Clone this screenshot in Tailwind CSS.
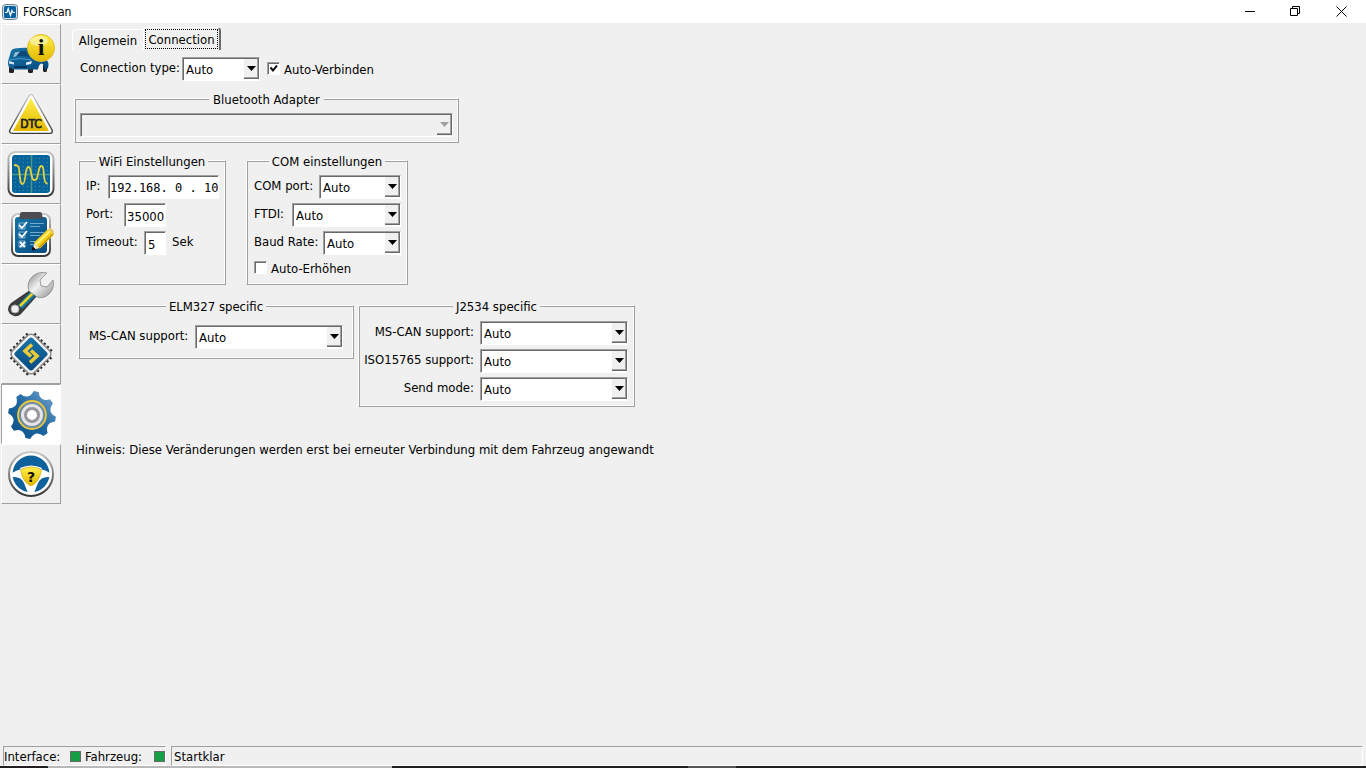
<!DOCTYPE html>
<html lang="de">
<head>
  <meta charset="UTF-8" />
  <meta name="viewport" content="width=device-width, initial-scale=1.0" />
  <title>FORScan</title>
  <script src="https://cdn.jsdelivr.net/npm/@tailwindcss/browser@4"></script>
</head>
<body class="flex h-screen flex-col overflow-hidden bg-[#f0f0f0] font-['DejaVu_Sans_Condensed','DejaVu_Sans',sans-serif] text-[13px] leading-4 text-black">
  <!-- Shared gradients -->
  <svg class="absolute size-0" aria-hidden="true">
    <defs>
      <linearGradient id="blue" x1="0" y1="0" x2="1" y2="1"><stop offset="0" stop-color="#1674a8" /><stop offset="1" stop-color="#084a80" /></linearGradient>
      <linearGradient id="yellow" x1="0" y1="0" x2="0" y2="1"><stop offset="0" stop-color="#fff04a" /><stop offset="1" stop-color="#e3b800" /></linearGradient>
      <linearGradient id="steel" x1="0" y1="0" x2="0" y2="1"><stop offset="0" stop-color="#c8c8c8" /><stop offset="1" stop-color="#383838" /></linearGradient>
      <linearGradient id="chrome" x1="0" y1="0" x2="1" y2="1"><stop offset="0" stop-color="#858585" /><stop offset=".45" stop-color="#f2f2f2" /><stop offset="1" stop-color="#8c8c8c" /></linearGradient>
      <linearGradient id="gear" x1="0" y1="1" x2="1" y2="0"><stop offset="0" stop-color="#084c86" /><stop offset=".5" stop-color="#2067a0" /><stop offset="1" stop-color="#78a9d2" /></linearGradient>
    </defs>
  </svg>

  <!-- Title bar -->
  <header class="flex h-[23px] shrink-0 items-center bg-white pr-0.5 pl-[2px]">
    <svg class="mr-[5px] size-4" viewBox="0 0 16 16" aria-hidden="true">
      <rect x=".5" y=".5" width="15" height="15" rx="3" fill="#d5e2eb" stroke="#6b8494" />
      <rect x="2" y="2" width="12" height="12" rx="1.5" fill="#07619c" />
      <path d="M3 8.500h2l1.200-4 2.300 7 1.500-5 1 2h2" fill="none" stroke="#fff" stroke-width="1.200" />
    </svg>
    <h1 class="flex-1 text-[12px]">FORScan</h1>
    <button class="flex h-5 w-[46px] items-center justify-center" aria-label="Minimieren">
      <svg class="size-[11px]" viewBox="0 0 11 11"><path d="M0 5.500h10" stroke="#000" /></svg>
    </button>
    <button class="flex h-5 w-[45px] items-center justify-center" aria-label="Wiederherstellen">
      <svg class="size-[11px]" viewBox="0 0 11 11"><path d="M.5 2.500h7v7h-7zM2.500 2.500v-2h7v7h-2" fill="none" stroke="#000" /></svg>
    </button>
    <button class="flex h-5 w-[46px] items-center justify-center" aria-label="Schließen">
      <svg class="size-[11px]" viewBox="0 0 11 11"><path d="M.5.5l10 10M10.500.5l-10 10" stroke="#000" /></svg>
    </button>
  </header>

  <div class="flex min-h-0 flex-1">
    <!-- Sidebar -->
    <nav class="ml-px w-[60px] shrink-0 pt-px" aria-label="Module">
      <button class="block size-[60px] border border-t-white border-r-[#a0a0a0] border-b-[#a0a0a0] border-l-white" aria-label="Fahrzeug">
        <svg class="size-[58px]" viewBox="2 1 58 58">
          <rect x="9" y="41" width="5" height="8" rx="1.500" fill="#222" /><rect x="28" y="42" width="5" height="7" rx="1.500" fill="#222" /><rect x="43" y="40" width="4" height="8" rx="1.500" fill="#222" />
          <path d="M9 34l2-7q1-2.500 4-2.500 10-1.500 19 0l9 9 4 3q1.500 1 1.500 4l-.5 4-3 1q-1-6-3.500-6T38 45.500H14l-5-2q-2-5 0-9.500z" fill="url(#blue)" />
          <path d="M12.500 33l2.500-6h11q2 3 3 6-9-2-16.500 0z" fill="#0b4a78" />
          <path d="M13 33l2-5 5-.5-4 5z" fill="#8fbcd6" />
          <path d="M28 27h5l6 6-8 .5z" fill="#8fbcd6" />
          <path d="M9 36q11-3 22 0" stroke="#4c97c4" fill="none" />
          <path d="M9 37l5 1.500v2L9 39.500z" fill="#dbe8ef" /><path d="M32 37l-6 1.500v2.500l5-1z" fill="#e1edf3" />
          <path d="M14 42h13v2H14z" fill="#04355e" />
          <circle cx="41" cy="24" r="13.500" fill="url(#yellow)" stroke="#e2bd1c" />
          <ellipse cx="39" cy="17" rx="9" ry="5" fill="#fff" opacity=".45" />
          <text x="41" y="31" text-anchor="middle" font-family="Liberation Serif, serif" font-weight="700" font-size="24" fill="#111">i</text>
        </svg>
      </button>
      <button class="block size-[60px] border border-t-white border-r-[#a0a0a0] border-b-[#a0a0a0] border-l-white" aria-label="DTC">
        <svg class="size-[58px]" viewBox="2 1 58 58">
          <path d="M31 13L12 47h38z" fill="#fff" stroke="url(#steel)" stroke-width="6" stroke-linejoin="round" />
          <path d="M31 13L12 47h38z" fill="url(#yellow)" stroke="#fff" stroke-width="3.500" stroke-linejoin="round" />
          <path d="M31 14L13 47h36z" fill="url(#yellow)" />
          <text x="31" y="44" text-anchor="middle" font-family="DejaVu Sans Condensed, sans-serif" font-size="12" stroke="#222" stroke-width=".7" fill="#222">DTC</text>
        </svg>
      </button>
      <button class="block size-[60px] border border-t-white border-r-[#a0a0a0] border-b-[#a0a0a0] border-l-white" aria-label="Oszilloskop">
        <svg class="size-[58px]" viewBox="2 1 58 58">
          <rect x="8.500" y="8" width="45" height="44" rx="7" fill="#fff" stroke="url(#steel)" stroke-width="2" />
          <rect x="12" y="11" width="38" height="38" rx="3" fill="#07649b" />
          <path d="M15 14.500h33M15 18.500h33M15 22.500h33M15 26.500h33M15 34.500h33M15 38.500h33M15 42.500h33M15 46.500h33" stroke="#3c8fae" stroke-dasharray="1 3" />
          <path d="M12 30.500h38M31.500 11v38" stroke="#4d9686" stroke-width="1.500" />
          <path d="M14 21c5 0 5 2 5.500 8s1 11 3 11 2.500-4 3-9 1-8 3-8 2 4 3 8 1 5 3.500 5 2-2 3-6 1-8 3.500-8 2 6 2.500 10 .500 7 3.500 8" fill="none" stroke="#e5d13b" stroke-width="1.800" />
        </svg>
      </button>
      <button class="block size-[60px] border border-t-white border-r-[#a0a0a0] border-b-[#a0a0a0] border-l-white" aria-label="Tests">
        <svg class="size-[58px]" viewBox="2 1 58 58">
          <rect x="12" y="10" width="38" height="42" rx="6" fill="#fff" stroke="url(#steel)" stroke-width="2" />
          <rect x="15" y="13" width="32" height="36" rx="3" fill="url(#blue)" />
          <path d="M20 10q0-2 2-2h18q2 0 2 2l1 5H19z" fill="#4b4d50" />
          <path d="M19 19h6v6h-6zM19 28h6v6h-6zM19 37h6v6h-6z" fill="none" stroke="#7fb0cd" />
          <path d="M19 21l3 3 5-6M19 30l3 3 5-6M20 38l5 5M25 38l-5 5" fill="none" stroke="#fff" stroke-width="1.800" />
          <path d="M30 19.500h14M30 22.500h10M30 28.500h14M30 31.500h10M30 37.500h8M30 40.500h5" stroke="#6fa9cb" />
          <path d="M32 46l3-8 5 6z" fill="#ece2c0" />
          <path d="M32 46l1-3 2.500 2.500z" fill="#111" stroke="#111" />
          <path d="M34 38.500L48 25l6 5.500L40 44.500z" fill="#f5cf16" />
          <path d="M36 40.500L50 27" stroke="#ffef7e" stroke-width="2" /><path d="M39 43.500L53 30" stroke="#c79800" stroke-width="1.500" />
          <path d="M48 25l2-1q4 1 4 5v1.500z" fill="#edc968" />
        </svg>
      </button>
      <button class="block size-[60px] border border-t-white border-r-[#a0a0a0] border-b-[#a0a0a0] border-l-white" aria-label="Service">
        <svg class="size-[58px]" viewBox="2 1 58 58">
          <path d="M30 26l7 6-16 18q-3 3-7 2-6-2-6-7 0-3 3-6z" fill="#3b3d3f" />
          <path d="M30 28l5 4-13 13-4-4z" fill="#1277a9" />
          <path d="M33 29L20 42" stroke="#f1d51c" stroke-width="2.500" />
          <circle cx="15" cy="45" r="4" fill="#f0f0f0" stroke="#aaa" stroke-width="1" />
          <path d="M29 27q-3-9 4-15 6-5 14-3l-7 7 1 6 6 1 6-7q2 8-4 14-5 5-12 3z" fill="url(#chrome)" stroke="#888" stroke-width=".8" />
        </svg>
      </button>
      <button class="block size-[60px] border border-t-white border-r-[#a0a0a0] border-b-[#a0a0a0] border-l-white" aria-label="Module programmieren">
        <svg class="size-[58px]" viewBox="2 1 58 58">
          <g transform="rotate(45 31 30)">
            <path d="M20 12v36M24.500 12v36M29 12v36M33.500 12v36M38 12v36M42.500 12v36M13 19h36M13 23.500h36M13 28h36M13 32.500h36M13 37h36M13 41.500h36" stroke="#2b2b2b" stroke-width="2.200" />
            <rect x="15.500" y="14.500" width="31" height="31" rx="5" fill="#f4f4f4" stroke="#8a8a8a" stroke-width="1.500" />
            <rect x="18.500" y="17.500" width="25" height="25" rx="3" fill="url(#blue)" />
          </g>
          <path d="M32 20.500L25 27l6 5.500M31 26.500l6 5.500-7 6.500" fill="none" stroke="#edcb36" stroke-width="3.600" />
        </svg>
      </button>
      <button class="block size-[60px] border border-t-[#a0a0a0] border-r-white border-b-white border-l-[#a0a0a0] bg-white" aria-label="Einstellungen" aria-pressed="true">
        <svg class="size-[58px]" viewBox="2 1 58 58">
          <path d="M33.700 7.100L38.600 7.900Q40.100 18.300 50.100 15.300L53 19.400Q46.600 27.800 55.900 32.700L55.100 37.600Q44.700 39.100 47.700 49.100L43.600 52Q35.200 45.600 30.300 54.900L25.400 54.100Q23.900 43.700 13.900 46.700L11 42.600Q17.400 34.200 8.100 29.300L8.900 24.400Q19.300 22.900 16.300 12.900L20.400 10Q28.800 16.400 33.700 7.100z" fill="url(#gear)" />
          <circle cx="32" cy="31" r="14" fill="#6d8ba2" stroke="#e8c83c" stroke-width="1.800" />
          <circle cx="32" cy="31" r="9" fill="#fff" stroke="#e5e5e8" stroke-width="4" />
          <circle cx="32" cy="31" r="6.500" fill="#fff" stroke="#97979b" stroke-width="3" />
        </svg>
      </button>
      <button class="block size-[60px] border border-t-white border-r-[#a0a0a0] border-b-[#a0a0a0] border-l-white" aria-label="Hilfe">
        <svg class="size-[58px]" viewBox="2 1 58 58">
          <circle cx="31" cy="30" r="22" fill="#fff" stroke="url(#steel)" stroke-width="2" />
          <circle cx="31" cy="30" r="18.500" fill="#0e619b" />
          <path d="M12 29q8-5 19-5t19 5v4q-9-1-12 6l-4 10h-6l-4-10q-3-7-12-6z" fill="#fff" />
          <path d="M20 24q11-5 22 0l-2 3H22z" fill="#fff" />
          <path d="M22 25q9-4 18 0 2 1 1 3-2 9-8 13-2 1-4 0-6-4-8-13-1-2 1-3z" fill="url(#yellow)" stroke="#d1ac1d" stroke-width=".8" />
          <text x="31" y="38" text-anchor="middle" font-family="DejaVu Sans, sans-serif" font-weight="700" font-size="14" fill="#111">?</text>
        </svg>
      </button>
    </nav>

    <main class="min-w-0 flex-1 overflow-hidden pt-1 pl-[11px]">
      <!-- Tabs -->
      <div class="flex items-end" role="tablist">
        <button role="tab" aria-selected="false" class="h-[21px] w-[71px] rounded-tl-sm border-t border-l border-white pt-0.5">Allgemein</button>
        <button role="tab" aria-selected="true" class="h-[23px] w-[78px] rounded-t-sm border-t border-r-2 border-l border-t-white border-r-[#696969] border-l-white p-px">
          <span class="block h-5 border border-dotted border-black leading-5">Connection</span>
        </button>
      </div>

      <div class="mt-[7px] ml-2 flex h-6 items-center">
        <label for="connType" class="w-[102px] pb-0.5">Connection type:</label>
        <span class="relative w-[78px]">
          <select id="connType" class="block h-6 w-full appearance-none border border-t-[#a0a0a0] border-r-white border-b-white border-l-[#a0a0a0] bg-white pt-0.5 pl-[3px] shadow-[inset_1px_1px_0_#696969]"><option>Auto</option></select>
          <span class="pointer-events-none absolute inset-y-[2px] right-px flex w-[15px] items-center justify-center border-r border-b border-[#696969] bg-[#f0f0f0] shadow-[inset_-1px_-1px_0_#a0a0a0]"><svg class="h-[5px] w-[9px]" viewBox="0 0 9 5"><path d="M0 0h9L4.500 5z" /></svg></span>
        </span>
        <label class="ml-[7px] flex items-center gap-1">
          <input type="checkbox" checked class="peer sr-only" />
          <span class="mb-0.5 flex size-[13px] items-center justify-center border border-t-[#a0a0a0] border-r-white border-b-white border-l-[#a0a0a0] bg-white shadow-[inset_1px_1px_0_#696969] *:hidden peer-checked:*:block"><svg class="size-[9px]" viewBox="0 0 9 9"><path d="M1.500 3.500L4 6.500l4-5" fill="none" stroke="#000" stroke-width="2" /></svg></span>
          <span class="pt-px">Auto-Verbinden</span>
        </label>
      </div>

      <fieldset class="mt-[7px] ml-0.5 w-[385px] border border-t-white border-r-[#a0a0a0] border-b-[#a0a0a0] border-l-white px-[5px] pt-[5px] pb-[5px] shadow-[inset_1px_1px_0_#a0a0a0,inset_-1px_-1px_0_#fff]">
        <legend class="mx-auto bg-[#f0f0f0] px-1 pt-1">Bluetooth Adapter</legend>
        <span class="relative block">
          <select disabled aria-label="Bluetooth Adapter" class="block h-6 w-full appearance-none border border-t-[#a0a0a0] border-r-white border-b-white border-l-[#a0a0a0] bg-[#f0f0f0] shadow-[inset_1px_1px_0_#696969]"><option></option></select>
          <span class="pointer-events-none absolute inset-y-[2px] right-px flex w-[15px] items-center justify-center border-r border-b border-[#696969] bg-[#f0f0f0] shadow-[inset_-1px_-1px_0_#a0a0a0]"><svg class="h-[5px] w-[9px]" viewBox="0 0 9 5"><path d="M0 0h9L4.500 5z" fill="#a0a0a0" /></svg></span>
        </span>
      </fieldset>

      <div class="mt-[7px] ml-1.5 flex gap-5">
        <fieldset class="w-[148px] border border-t-white border-r-[#a0a0a0] border-b-[#a0a0a0] border-l-white shadow-[inset_1px_1px_0_#a0a0a0,inset_-1px_-1px_0_#fff]">
          <legend class="mx-auto bg-[#f0f0f0] px-[3px] pt-1">WiFi Einstellungen</legend>
          <div class="flex flex-col gap-1 pt-[5px] pl-[7px]">
            <div class="flex items-center">
              <label for="ip" class="w-[22px] pb-0.5">IP:</label>
              <input id="ip" type="text" value="192.168. 0 . 10" class="h-6 w-[111px] border border-t-[#a0a0a0] border-r-white border-b-white border-l-[#a0a0a0] bg-white pt-0.5 pl-px font-['DejaVu_Sans_Mono',monospace] text-[12px] shadow-[inset_1px_1px_0_#696969]" />
            </div>
            <div class="flex items-center">
              <label for="port" class="w-[38px] pb-0.5">Port:</label>
              <input id="port" type="text" value="35000" class="h-6 w-[42px] border border-t-[#a0a0a0] border-r-white border-b-white border-l-[#a0a0a0] bg-white pt-0.5 pl-[2px] shadow-[inset_1px_1px_0_#696969]" />
            </div>
            <div class="flex items-center">
              <label for="timeout" class="w-[58px] pb-0.5">Timeout:</label>
              <input id="timeout" type="text" value="5" class="h-6 w-[22px] border border-t-[#a0a0a0] border-r-white border-b-white border-l-[#a0a0a0] bg-white pt-0.5 pl-[3px] shadow-[inset_1px_1px_0_#696969]" />
              <span class="pb-0.5 pl-1.5">Sek</span>
            </div>
          </div>
        </fieldset>

        <fieldset class="w-[162px] border border-t-white border-r-[#a0a0a0] border-b-[#a0a0a0] border-l-white shadow-[inset_1px_1px_0_#a0a0a0,inset_-1px_-1px_0_#fff]">
          <legend class="mx-auto bg-[#f0f0f0] px-[3px] pt-1">COM einstellungen</legend>
          <div class="flex flex-col gap-1 pt-[5px] pr-1.5 pl-[7px]">
            <div class="flex items-center justify-between">
              <label for="comPort" class="pb-0.5">COM port:</label>
              <span class="relative w-[82px]">
                <select id="comPort" class="block h-6 w-full appearance-none border border-t-[#a0a0a0] border-r-white border-b-white border-l-[#a0a0a0] bg-white pt-0.5 pl-[3px] shadow-[inset_1px_1px_0_#696969]"><option>Auto</option></select>
                <span class="pointer-events-none absolute inset-y-[2px] right-px flex w-[15px] items-center justify-center border-r border-b border-[#696969] bg-[#f0f0f0] shadow-[inset_-1px_-1px_0_#a0a0a0]"><svg class="h-[5px] w-[9px]" viewBox="0 0 9 5"><path d="M0 0h9L4.500 5z" /></svg></span>
              </span>
            </div>
            <div class="flex items-center justify-between">
              <label for="ftdi" class="pb-0.5">FTDI:</label>
              <span class="relative w-[109px]">
                <select id="ftdi" class="block h-6 w-full appearance-none border border-t-[#a0a0a0] border-r-white border-b-white border-l-[#a0a0a0] bg-white pt-0.5 pl-[3px] shadow-[inset_1px_1px_0_#696969]"><option>Auto</option></select>
                <span class="pointer-events-none absolute inset-y-[2px] right-px flex w-[15px] items-center justify-center border-r border-b border-[#696969] bg-[#f0f0f0] shadow-[inset_-1px_-1px_0_#a0a0a0]"><svg class="h-[5px] w-[9px]" viewBox="0 0 9 5"><path d="M0 0h9L4.500 5z" /></svg></span>
              </span>
            </div>
            <div class="flex items-center justify-between">
              <label for="baud" class="pb-0.5">Baud Rate:</label>
              <span class="relative w-[78px]">
                <select id="baud" class="block h-6 w-full appearance-none border border-t-[#a0a0a0] border-r-white border-b-white border-l-[#a0a0a0] bg-white pt-0.5 pl-[3px] shadow-[inset_1px_1px_0_#696969]"><option>Auto</option></select>
                <span class="pointer-events-none absolute inset-y-[2px] right-px flex w-[15px] items-center justify-center border-r border-b border-[#696969] bg-[#f0f0f0] shadow-[inset_-1px_-1px_0_#a0a0a0]"><svg class="h-[5px] w-[9px]" viewBox="0 0 9 5"><path d="M0 0h9L4.500 5z" /></svg></span>
              </span>
            </div>
          </div>
          <label class="mt-[5px] mb-[7px] flex items-center gap-1 pl-[7px]">
            <input type="checkbox" class="peer sr-only" />
            <span class="mb-0.5 flex size-[13px] items-center justify-center border border-t-[#a0a0a0] border-r-white border-b-white border-l-[#a0a0a0] bg-white shadow-[inset_1px_1px_0_#696969] *:hidden peer-checked:*:block"><svg class="size-[9px]" viewBox="0 0 9 9"><path d="M1.500 3.500L4 6.500l4-5" fill="none" stroke="#000" stroke-width="2" /></svg></span>
            <span class="pt-px">Auto-Erhöhen</span>
          </label>
        </fieldset>
      </div>

      <div class="mt-[10px] ml-1.5 flex items-start gap-1">
        <fieldset class="w-[276px] border border-t-white border-r-[#a0a0a0] border-b-[#a0a0a0] border-l-white px-[10px] pt-[10px] pb-[9px] shadow-[inset_1px_1px_0_#a0a0a0,inset_-1px_-1px_0_#fff]">
          <legend class="mx-auto bg-[#f0f0f0] px-[3px] pt-1">ELM327 specific</legend>
          <div class="flex items-center justify-between">
            <label for="elmMsCan" class="pb-0.5">MS-CAN support:</label>
            <span class="relative w-[148px]">
              <select id="elmMsCan" class="block h-6 w-full appearance-none border border-t-[#a0a0a0] border-r-white border-b-white border-l-[#a0a0a0] bg-white pt-0.5 pl-[3px] shadow-[inset_1px_1px_0_#696969]"><option>Auto</option></select>
              <span class="pointer-events-none absolute inset-y-[2px] right-px flex w-[15px] items-center justify-center border-r border-b border-[#696969] bg-[#f0f0f0] shadow-[inset_-1px_-1px_0_#a0a0a0]"><svg class="h-[5px] w-[9px]" viewBox="0 0 9 5"><path d="M0 0h9L4.500 5z" /></svg></span>
            </span>
          </div>
        </fieldset>

        <fieldset class="w-[277px] border border-t-white border-r-[#a0a0a0] border-b-[#a0a0a0] border-l-white shadow-[inset_1px_1px_0_#a0a0a0,inset_-1px_-1px_0_#fff]">
          <legend class="mx-auto bg-[#f0f0f0] px-[3px] pt-1">J2534 specific</legend>
          <div class="flex flex-col gap-1 pt-1.5 pr-1.5 pb-[5px]">
            <div class="flex items-center justify-end gap-1.5">
              <label for="jMsCan" class="pb-0.5">MS-CAN support:</label>
              <span class="relative w-[148px]">
                <select id="jMsCan" class="block h-6 w-full appearance-none border border-t-[#a0a0a0] border-r-white border-b-white border-l-[#a0a0a0] bg-white pt-0.5 pl-[3px] shadow-[inset_1px_1px_0_#696969]"><option>Auto</option></select>
                <span class="pointer-events-none absolute inset-y-[2px] right-px flex w-[15px] items-center justify-center border-r border-b border-[#696969] bg-[#f0f0f0] shadow-[inset_-1px_-1px_0_#a0a0a0]"><svg class="h-[5px] w-[9px]" viewBox="0 0 9 5"><path d="M0 0h9L4.500 5z" /></svg></span>
              </span>
            </div>
            <div class="flex items-center justify-end gap-1.5">
              <label for="jIso" class="pb-0.5">ISO15765 support:</label>
              <span class="relative w-[148px]">
                <select id="jIso" class="block h-6 w-full appearance-none border border-t-[#a0a0a0] border-r-white border-b-white border-l-[#a0a0a0] bg-white pt-0.5 pl-[3px] shadow-[inset_1px_1px_0_#696969]"><option>Auto</option></select>
                <span class="pointer-events-none absolute inset-y-[2px] right-px flex w-[15px] items-center justify-center border-r border-b border-[#696969] bg-[#f0f0f0] shadow-[inset_-1px_-1px_0_#a0a0a0]"><svg class="h-[5px] w-[9px]" viewBox="0 0 9 5"><path d="M0 0h9L4.500 5z" /></svg></span>
              </span>
            </div>
            <div class="flex items-center justify-end gap-1.5">
              <label for="jSend" class="pb-0.5">Send mode:</label>
              <span class="relative w-[148px]">
                <select id="jSend" class="block h-6 w-full appearance-none border border-t-[#a0a0a0] border-r-white border-b-white border-l-[#a0a0a0] bg-white pt-0.5 pl-[3px] shadow-[inset_1px_1px_0_#696969]"><option>Auto</option></select>
                <span class="pointer-events-none absolute inset-y-[2px] right-px flex w-[15px] items-center justify-center border-r border-b border-[#696969] bg-[#f0f0f0] shadow-[inset_-1px_-1px_0_#a0a0a0]"><svg class="h-[5px] w-[9px]" viewBox="0 0 9 5"><path d="M0 0h9L4.500 5z" /></svg></span>
              </span>
            </div>
          </div>
        </fieldset>
      </div>

      <p class="mt-[35px] ml-1">Hinweis: Diese Veränderungen werden erst bei erneuter Verbindung mit dem Fahrzeug angewandt</p>
    </main>
  </div>

  <!-- Status bar -->
  <footer class="shrink-0">
    <div class="flex gap-[5px] pr-[3px] pl-[3px]">
      <div class="flex h-5 w-[163px] items-center border border-t-[#a0a0a0] border-r-white border-b-white border-l-[#a0a0a0]">
        <span class="w-[66px] pt-px">Interface:</span>
        <span class="size-[11px] border border-[#696969] bg-[#16a046]"></span>
        <span class="w-[73px] pt-px pl-1">Fahrzeug:</span>
        <span class="size-[11px] border border-[#696969] bg-[#16a046]"></span>
      </div>
      <div class="h-5 flex-1 border border-t-[#a0a0a0] border-r-white border-b-white border-l-[#a0a0a0] pt-0.5 pl-0.5">Startklar</div>
    </div>
    <div class="flex h-0.5 bg-[#231f20]"><span class="ml-12 w-[344px] bg-[#b8b8b8]"></span><span class="ml-[296px] w-12 bg-[#555]"></span></div>
  </footer>
</body>
</html>
